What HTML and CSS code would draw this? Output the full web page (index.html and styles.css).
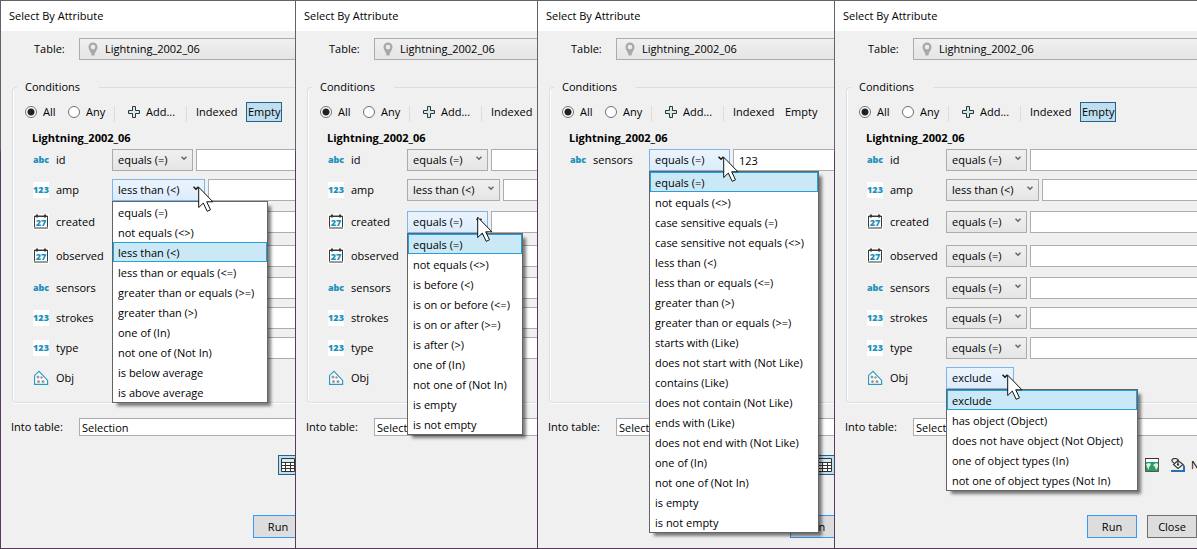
FILE: index.html
```html
<!DOCTYPE html>
<html lang="en">
<head>
    <meta charset="UTF-8">
    <meta name="viewport" content="width=device-width, initial-scale=1.0">
    <title>Select By Attribute</title>
    <link rel="stylesheet" href="styles.css">
</head>
<body>
    <svg class="sprite" aria-hidden="true">
      <symbol id="pin" viewBox="0 0 10 14">
        <path fill="#a8a8a8" fill-rule="evenodd" d="M5 0.500a4.500 4.500 0 0 1 4.500 4.500c0 3-2.600 4.600-3.100 8.500h-2.800c-0.500-3.900-3.100-5.500-3.100-8.500a4.500 4.500 0 0 1 4.500-4.500zM5 2.800a2.300 2.300 0 1 0 0 4.600a2.300 2.300 0 1 0 0-4.600z"/>
      </symbol>
      <symbol id="plus" viewBox="0 0 12 12">
        <path fill="#d3eaf2" stroke="#333" d="M4.500 0.500h3v4h4v3h-4v4h-3v-4h-4v-3h4z"/>
      </symbol>
      <symbol id="chevron" viewBox="0 0 6 5">
        <path fill="none" stroke="currentColor" stroke-width="1.500" d="M0.500 0.700L3 3.200L5.500 0.700"/>
      </symbol>
      <symbol id="cursor" viewBox="0 0 17 27">
        <path fill="#fff" stroke="#111" d="M0.700 1.200v20.300l4.600-4.400l3.900 8.200l3.300-1.500l-3.800-8h6.200z"/>
      </symbol>
      <symbol id="date" viewBox="0 0 16 16">
        <path fill="#fff" d="M0 0h16v16H0z"/>
        <path fill="none" stroke="#3a3a3a" d="M1.500 14v-12h13v12"/>
        <path stroke="#3a3a3a" d="M1 2.500h14"/>
        <path stroke="#3a3a3a" d="M4 0.500v3M12 0.500v3" stroke-width="2"/>
        <path stroke="#9a9a9a" d="M1 14h14" stroke-width="2"/>
        <text x="8" y="12" text-anchor="middle" class="glyph">27</text>
      </symbol>
      <symbol id="object" viewBox="0 0 16 16">
        <path fill="#fff" stroke="#2d9ac4" stroke-width="1.200" d="M1.600 14.400v-9l4.400-4l8.600 9v4z"/>
        <g fill="#999"><circle cx="5" cy="7" r="1.500"/><circle cx="8.500" cy="7.500" r="1.200"/><circle cx="5.500" cy="11.500" r="1.500"/><circle cx="10" cy="11.500" r="1.500"/></g>
      </symbol>
      <symbol id="grid" viewBox="0 0 14 14">
        <path fill="#fff" stroke="#333" d="M0.500 0.500h13v13h-13z"/>
        <path fill="#d3eaf2" d="M1 1h12v3H1z"/>
        <path fill="none" stroke="#333" d="M0 4.500h14M0 7.500h14M0 10.500h14M4.500 4v10M9.500 4v10"/>
      </symbol>
      <symbol id="map" viewBox="0 0 14 14">
        <path fill="#2f9c68" stroke="#555" d="M0.500 0.500h13v13h-13z"/>
        <path fill="#fff" d="M1 1h12v3H1z"/>
        <path stroke="#333" d="M0 0.500h14"/>
        <path fill="#d8f0e2" d="M1 6l3-1l2 1l-1 2l-1 1v3l-2-3zM8 7l3-2l2 1v3l-2 3l-1-3z"/>
      </symbol>
      <symbol id="fill" viewBox="0 0 14 14">
        <path stroke="#2f6fae" d="M0 13h14" stroke-width="2"/>
        <path fill="#fff" stroke="#333" stroke-width="1.200" d="M2.500 6.500l4.500-4l5 4l-5 4z"/>
        <path fill="none" stroke="#333" stroke-width="1.200" d="M3 5c-5-3 0-6 4-3.500v4"/>
        <circle cx="7" cy="6.500" r="1.200" fill="#333"/>
        <path fill="#2f6fae" d="M12 6l2 2v4h-2z"/>
      </symbol>
    </svg>

    <main class="screens" id="screens"></main>

    <script src="script.js"></script>
</body>
</html>
```
FILE: styles.css
```css
* {
    box-sizing: border-box;
}
body {
    margin: 0;
    color: #000;
    font-family: "Segoe UI", "Open Sans", sans-serif;
    font-size: 11px;
    line-height: 16px;
}
input, select, button {
    font: inherit;
    color: inherit;
    margin: 0;
}
.sprite {
    position: absolute;
    width: 0;
    height: 0;
}
.screens {
    display: grid;
    grid-template-columns: 295fr 242fr 297fr 363fr;
    min-height: 100vh;
}

/* dialog window */
.dialog {
    min-width: 0;
    overflow: hidden;
    background-color: #f0f0f0;
    border: 1px solid #583a5c;
    border-right: 0;
    border-image: linear-gradient(#62626a 27%, #583a5c 28%) 1;
}
.dialog h1 {
    margin: 0;
    padding: 7px 8px;
    background-color: #fff;
    font-size: 11px;
    font-weight: 400;
    line-height: 16px;
}
.dialog form {
    padding: 7px 0 10px 10px;
}
.line {
    display: flex;
    align-items: center;
}
.line > label {
    flex: none;
    width: 68px;
}
.line > .table-label {
    padding-left: 23px;
}
.table-select {
    flex: 1;
    position: relative;
}
.table-select select {
    display: block;
    width: 100%;
    height: 22px;
    padding: 0 25px;
    appearance: none;
    border: 1px solid #acacac;
    border-right: 0;
    border-radius: 0;
    background: linear-gradient(#f0f0f0, #e5e5e5);
}
.table-select svg {
    position: absolute;
    left: 9px;
    top: 4px;
    width: 10px;
    height: 14px;
}

/* conditions */
.conditions {
    min-width: 0;
    margin: 19px 0 15px 1px;
    padding: 7px 0 13px 12px;
    border: 1px solid #d5dfe5;
    border-right: 0;
    border-radius: 4px 0 0 4px;
    box-shadow: inset 1px 0 #fff, 0 1px #fff;
}
.conditions legend {
    margin-left: -8px;
    padding: 0 19px 0 8px;
}
.toolbar {
    display: flex;
    align-items: center;
    height: 20px;
    white-space: nowrap;
}
.toolbar > * {
    flex: none;
}
.toolbar label {
    display: flex;
    align-items: center;
    gap: 6px;
    width: 43px;
}
.toolbar input {
    appearance: none;
    width: 12px;
    height: 12px;
    border: 1px solid #707070;
    border-radius: 50%;
    background-color: #fff;
}
.toolbar input:checked {
    background-image: radial-gradient(circle, #212121 3px, transparent 4px);
}
.tool {
    display: flex;
    align-items: center;
    gap: 6px;
    height: 20px;
    padding: 0 1px;
    border: 1px solid transparent;
    background: none;
}
.tool svg {
    width: 12px;
    height: 12px;
}
.tool.on {
    border-color: #26608c;
    background-color: #bfdfef;
}
.add {
    width: 73px;
    margin-left: 3px;
    padding-left: 13px;
    border-width: 0 1px;
    border-image: linear-gradient(transparent 25%, #dcdcdc 25%) 1;
}
.indexed {
    width: 52px;
    margin-left: 7px;
}
.conditions h2 {
    margin: 8px 0 3px 7px;
    font-size: 11px;
    font-weight: 700;
    line-height: 16px;
}
.fields {
    display: flex;
    flex-direction: column;
    gap: 8px;
    min-height: 240px;
    margin-left: 8px;
}
.field {
    display: flex;
    align-items: center;
    height: 22px;
}
.field.date {
    height: 26px;
}
.field > label {
    flex: none;
    width: 56px;
}
.icon {
    flex: none;
    width: 16px;
    height: 16px;
    margin-right: 7px;
}
.glyph {
    fill: #2090bb;
    font-family: "Open Sans", sans-serif;
    font-size: 9px;
    font-weight: 800;
}
.combo {
    position: relative;
    flex: none;
    width: 81px;
}
.combo.wide {
    width: 93px;
}
.combo.short {
    width: 68px;
}
.combo select {
    display: block;
    width: 100%;
    height: 22px;
    padding: 0 5px;
    appearance: none;
    border: 1px solid #acacac;
    border-radius: 0;
    background: linear-gradient(#f0f0f0, #e5e5e5);
}
.combo .chevron {
    position: absolute;
    right: 6px;
    top: 7px;
    width: 6px;
    height: 5px;
    color: #666;
}
.combo.open select {
    border-color: #7eb4ea;
    background: linear-gradient(#ebf4fc, #dcecfc);
}
.combo.open .chevron {
    color: #111;
}
.value {
    flex: 1;
    min-width: 0;
    height: 22px;
    margin-left: 3px;
    padding: 0 5px;
    border: 1px solid #abadb3;
    border-right: 0;
    background-color: #fff;
}

/* drop-down list */
.options {
    position: absolute;
    z-index: 1;
    left: 0;
    top: 22px;
    margin: 0;
    padding: 0;
    list-style: none;
    white-space: nowrap;
    border: 1px solid #646464;
    background-color: #fff;
    box-shadow: 4px 4px 3px -1px rgba(0, 0, 0, 0.5);
}
.options li {
    height: 20px;
    padding: 2px 4px;
    border: 1px solid transparent;
}
.options li.selected {
    border-color: #26a0da;
    background-color: #cbe8f6;
}
.options.number {
    width: 156px;
}
.options.time {
    width: 116px;
}
.options.text {
    width: 170px;
}
.options.geometry {
    width: 192px;
}
.cursor {
    position: absolute;
    z-index: 2;
    right: -10px;
    top: 7px;
    width: 17px;
    height: 27px;
}
.time + .cursor {
    right: -6px;
    top: 5px;
}

/* bottom of the dialog */
.into {
    flex: 1;
    min-width: 0;
    height: 18px;
    padding: 0 2px;
    border: 1px solid #abadb3;
    border-right: 0;
    background-color: #fff;
}
.actions {
    margin: 19px 0 40px;
    padding-left: 267px;
    gap: 6px;
}
.actions .tool {
    padding: 0 2px;
}
.actions .tool.on {
    margin-right: 4px;
}
.actions .tool svg {
    width: 14px;
    height: 14px;
}
.buttons {
    display: flex;
    gap: 10px;
    padding-left: 242px;
}
.buttons button {
    flex: none;
    width: 50px;
    height: 23px;
    padding: 0;
    border: 1px solid #707070;
    background-color: #ddd;
}
.buttons .run {
    border-color: #3399ff;
}
```
FILE: script.js
```js
const operators = {
  number: ['equals (=)', 'not equals (<>)', 'less than (<)', 'less than or equals (<=)',
    'greater than or equals (>=)', 'greater than (>)', 'one of (In)', 'not one of (Not In)',
    'is below average', 'is above average'],
  time: ['equals (=)', 'not equals (<>)', 'is before (<)', 'is on or before (<=)',
    'is on or after (>=)', 'is after (>)', 'one of (In)', 'not one of (Not In)',
    'is empty', 'is not empty'],
  text: ['equals (=)', 'not equals (<>)', 'case sensitive equals (=)', 'case sensitive not equals (<>)',
    'less than (<)', 'less than or equals (<=)', 'greater than (>)', 'greater than or equals (>=)',
    'starts with (Like)', 'does not start with (Not Like)', 'contains (Like)',
    'does not contain (Not Like)', 'ends with (Like)', 'does not end with (Not Like)',
    'one of (In)', 'not one of (Not In)', 'is empty', 'is not empty'],
  geometry: ['exclude', 'has object (Object)', 'does not have object (Not Object)',
    'one of object types (In)', 'not one of object types (Not In)']
}
const fields = [
  { name: 'id', type: 'text' },
  { name: 'amp', type: 'number', op: 'less than (<)' },
  { name: 'created', type: 'time' },
  { name: 'observed', type: 'time' },
  { name: 'sensors', type: 'text' },
  { name: 'strokes', type: 'number' },
  { name: 'type', type: 'number' },
  { name: 'Obj', type: 'geometry', op: 'exclude' }
]
const dialogs = [
  { open: 'amp', empty: true, fields: fields },
  { open: 'created', empty: true, fields: fields },
  { open: 'sensors', empty: false, fields: [{ name: 'sensors', type: 'text', value: '123' }] },
  { open: 'Obj', empty: true, fields: fields }
]

const esc = s => s.replace(/</g, '&lt;').replace(/>/g, '&gt;')
const use = (id, cls = '') => `<svg class="${cls}" aria-hidden="true"><use href="#${id}"/></svg>`

function icon(type) {
  if (type === 'time') return use('date', 'icon')
  if (type === 'geometry') return use('object', 'icon')
  const number = type === 'number'
  return `<svg class="icon" viewBox="0 0 16 16" aria-hidden="true">
    ${number ? '<path fill="#fff" d="M0 0h16v16H0z"/>' : ''}
    <text x="8" y="11" text-anchor="middle" class="glyph">${number ? '123' : 'abc'}</text>
  </svg>`
}

function combo(f, id, open) {
  const op = f.op || 'equals (=)'
  const size = op === 'exclude' ? 'short' : op === 'equals (=)' ? '' : 'wide'
  const items = operators[f.type].map(o =>
    `<li role="option" class="${o === op ? 'selected' : ''}">${esc(o)}</li>`).join('')
  return `<div class="combo ${size} ${open ? 'open' : ''}">
    <select id="${id}">${operators[f.type].map(o => `<option ${o === op ? 'selected' : ''}>${esc(o)}</option>`).join('')}</select>
    ${use('chevron', 'chevron')}
    ${open ? `<ul class="options ${f.type}" role="listbox">${items}</ul>${use('cursor', 'cursor')}` : ''}
  </div>`
}

function field(f, n, open) {
  const id = `${f.name}-${n}`
  return `<div class="field ${f.type === 'time' ? 'date' : ''}">
    ${icon(f.type)}
    <label for="${id}">${f.name}</label>
    ${combo(f, id, f.name === open)}
    ${f.type === 'geometry' ? '' : `<input class="value" type="text" aria-label="${f.name} value" value="${f.value || ''}">`}
  </div>`
}

document.getElementById('screens').innerHTML = dialogs.map((d, n) => `
  <section class="dialog">
    <h1>Select By Attribute</h1>
    <form>
      <div class="line">
        <label class="table-label" for="table-${n}">Table:</label>
        <div class="table-select">
          <select id="table-${n}"><option>Lightning_2002_06</option></select>
          ${use('pin')}
        </div>
      </div>
      <fieldset class="conditions">
        <legend>Conditions</legend>
        <div class="toolbar">
          <label><input type="radio" name="match" checked>All</label>
          <label><input type="radio" name="match">Any</label>
          <button type="button" class="tool add">${use('plus')}Add...</button>
          <button type="button" class="tool indexed">Indexed</button>
          <button type="button" class="tool ${d.empty ? 'on' : ''}">Empty</button>
        </div>
        <h2>Lightning_2002_06</h2>
        <div class="fields">${d.fields.map(f => field(f, n, d.open)).join('')}</div>
      </fieldset>
      <div class="line">
        <label for="into-${n}">Into table:</label>
        <input class="into" id="into-${n}" type="text" value="Selection">
      </div>
      <div class="toolbar actions">
        <button type="button" class="tool on" aria-label="Table">${use('grid')}</button>
        <button type="button" class="tool" aria-label="Map">${use('map')}</button>
        <button type="button" class="tool">${use('fill')}New</button>
      </div>
      <div class="buttons">
        <button type="button" class="run">Run</button>
        <button type="button">Close</button>
      </div>
    </form>
  </section>`).join('')
```
